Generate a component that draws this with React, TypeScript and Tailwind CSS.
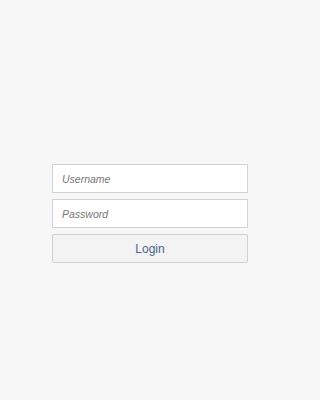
import React from "react";

export default function App() {
  return (
    <div
      className="w-full min-h-[400px] bg-[#f7f7f7] flex flex-col pl-[52px] pt-[164px]"
      style={{ fontFamily: '"Liberation Sans", Arial, sans-serif' }}
    >
      <div className="w-[196px] flex flex-col gap-[6px]">
        <input
          type="text"
          placeholder="Username"
          className="h-[29px] w-full bg-white border border-[#d3d3d3] px-[9px] text-[10.5px] italic text-[#333] placeholder:text-[#777] outline-none"
        />
        <input
          type="password"
          placeholder="Password"
          className="h-[29px] w-full bg-white border border-[#d3d3d3] px-[9px] text-[10.5px] italic text-[#333] placeholder:text-[#777] outline-none"
        />
        <button className="h-[29px] w-full bg-[#f3f3f3] border border-[#cfcfcf] rounded-[2px] text-[12px] text-[#47678a]">
          Login
        </button>
      </div>
    </div>
  );
}
